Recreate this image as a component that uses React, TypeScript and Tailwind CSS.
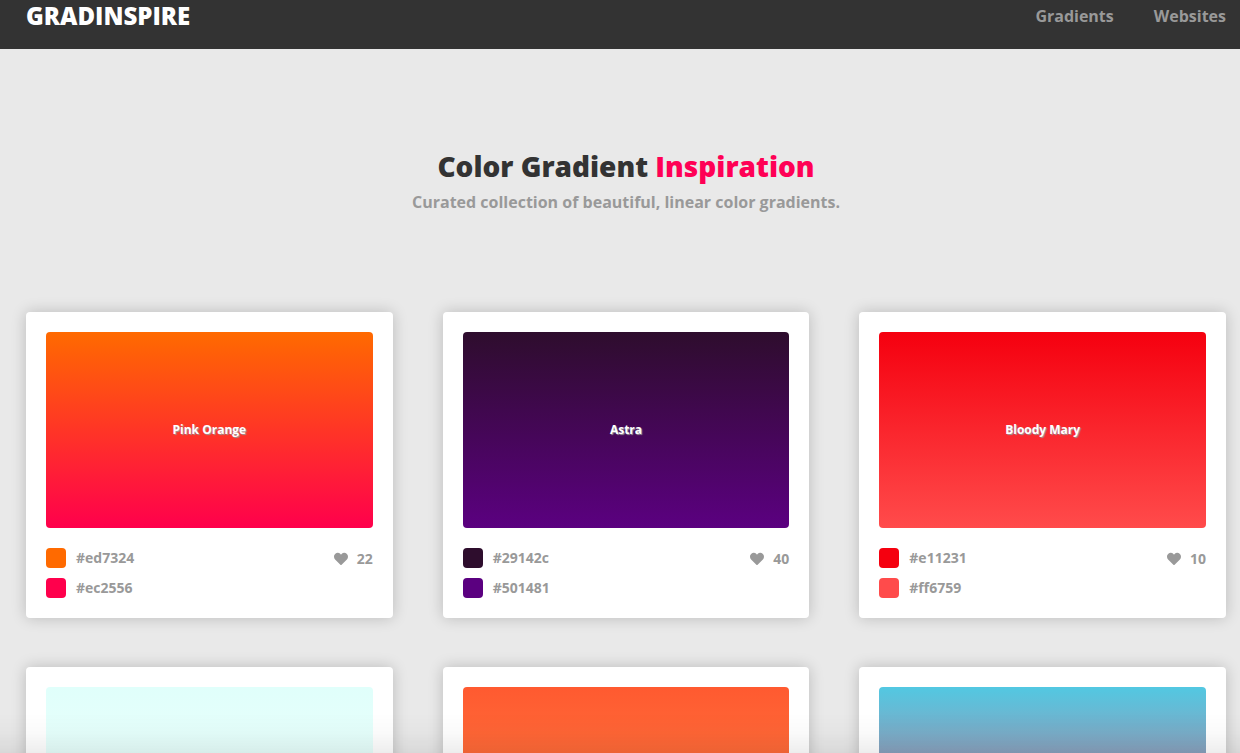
import React, { useState } from 'react';
import { FaHeart } from 'react-icons/fa';

interface Gradient {
  name: string;
  colors: [string, string];
  fill: string;
  swatches: [string, string];
  likes: number;
}

const gradients: Gradient[] = [
  {
    name: 'Pink Orange',
    colors: ['#ed7324', '#ec2556'],
    fill: 'bg-linear-to-b/srgb from-[#ff6a00] to-[#ff004c]',
    swatches: ['bg-[#ff6a00]', 'bg-[#ff004c]'],
    likes: 22,
  },
  {
    name: 'Astra',
    colors: ['#29142c', '#501481'],
    fill: 'bg-linear-to-b/srgb from-[#2e0d2d] to-[#5b0080]',
    swatches: ['bg-[#2e0d2d]', 'bg-[#5b0080]'],
    likes: 40,
  },
  {
    name: 'Bloody Mary',
    colors: ['#e11231', '#ff6759'],
    fill: 'bg-linear-to-b/srgb from-[#f5000f] to-[#ff4b4b]',
    swatches: ['bg-[#f5000f]', 'bg-[#ff4b4b]'],
    likes: 10,
  },
  {
    name: 'Fresh Air',
    colors: ['#e0fffa', '#f0f2f2'],
    fill: 'bg-linear-to-b/srgb from-[#e0fffb] to-[#f6fffd]',
    swatches: ['bg-[#e0fffb]', 'bg-[#f6fffd]'],
    likes: 18,
  },
  {
    name: 'Sunset',
    colors: ['#ff5a2f', '#ff7a4a'],
    fill: 'bg-linear-to-b/srgb from-[#ff5a30] to-[#ff8a48]',
    swatches: ['bg-[#ff5a30]', 'bg-[#ff8a48]'],
    likes: 31,
  },
  {
    name: 'Dusk',
    colors: ['#52c8e2', '#e04070'],
    fill: 'bg-linear-to-b/srgb from-[#52c8e2] to-[#f75575]',
    swatches: ['bg-[#52c8e2]', 'bg-[#f75575]'],
    likes: 27,
  },
];

const GradientCard = ({ gradient }: { gradient: Gradient }) => {
  const [liked, setLiked] = useState(false);

  return (
    <article className="bg-white rounded p-5 shadow-[0_0_15px_rgba(0,0,0,0.2)]">
      <div className={`aspect-[5/3] rounded flex items-center justify-center ${gradient.fill}`}>
        <h2 className="text-xs font-bold text-white [text-shadow:1px_1px_1px_#999]">{gradient.name}</h2>
      </div>
      <div className="mt-5 flex items-start justify-between">
        <ul className="flex flex-col gap-2.5">
          {gradient.colors.map((color, i) => (
            <li key={color} className="flex items-center gap-2.5">
              <span className={`size-5 rounded ${gradient.swatches[i]}`} />
              <span className="text-sm leading-5 font-bold">{color}</span>
            </li>
          ))}
        </ul>
        <button
          type="button"
          aria-label={`Like ${gradient.name}`}
          className="flex items-center gap-[9px] pt-px text-sm leading-5 font-bold cursor-pointer"
          onClick={() => setLiked(!liked)}
        >
          <FaHeart className="size-3.5" />
          {gradient.likes + (liked ? 1 : 0)}
        </button>
      </div>
    </article>
  );
};

const App = () => {
  return (
    <div className="min-h-screen bg-[#e9e9e9] text-[#999] font-['Open_Sans',sans-serif]">
      <header className="bg-[#333] pl-[26px] pr-3.5 pb-[17px] flex items-center justify-between">
        <a href="#" className="text-2xl leading-8 font-extrabold text-white">GRADINSPIRE</a>
        <nav className="flex gap-10 text-base leading-8 font-bold">
          <a href="#gradients">Gradients</a>
          <a href="#websites">Websites</a>
        </nav>
      </header>

      <main className="pl-[26px] pr-3.5 pb-12">
        <section className="pt-[97px] pb-[98px] text-center">
          <h1 className="text-[28px] leading-10 font-extrabold text-[#333]">
            Color Gradient <span className="text-[#ff0055]">Inspiration</span>
          </h1>
          <p className="mt-1 text-base leading-6 font-bold">
            Curated collection of beautiful, linear color gradients.
          </p>
        </section>

        <section id="gradients" className="grid grid-cols-3 gap-x-[50px] gap-y-[49px]">
          {gradients.map(gradient => (
            <GradientCard key={gradient.name} gradient={gradient} />
          ))}
        </section>
      </main>

      {/* Fade along the bottom edge of the window */}
      <div className="pointer-events-none fixed inset-x-0 bottom-0 h-10 bg-linear-to-t from-black/7 via-black/2 to-transparent" />
    </div>
  );
};

export default App;
